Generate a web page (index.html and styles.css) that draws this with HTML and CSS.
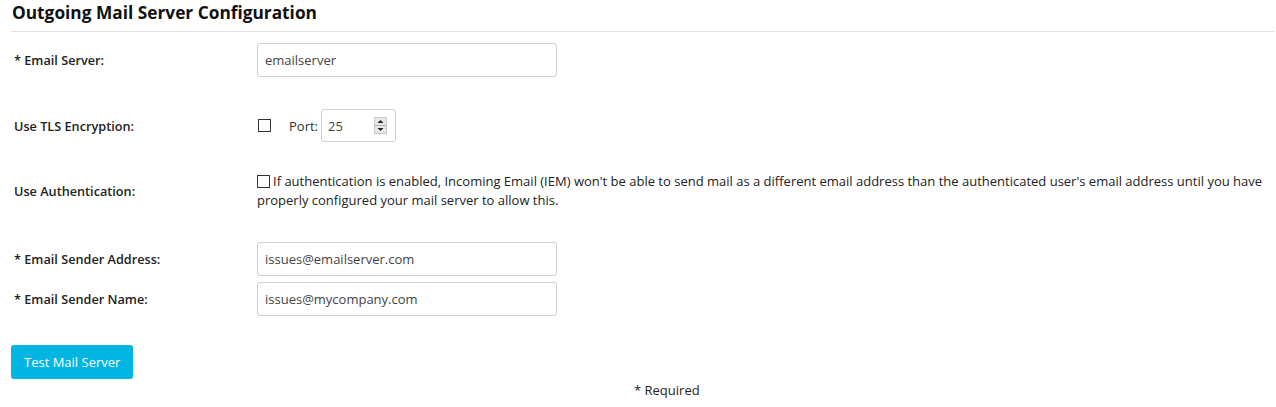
FILE: index.html
```html
<!DOCTYPE html>
<html>
<head>
<meta charset="utf-8">
<link rel="stylesheet" href="styles.css">
</head>
<body>
<div class="page">
  <h2 class="title">Outgoing Mail Server Configuration</h2>
  <div class="form">
    <div class="row r1">
      <label class="lbl">* Email Server:</label>
      <div class="field"><input class="txt" type="text" value="emailserver"></div>
    </div>
    <div class="row r2">
      <label class="lbl">Use TLS Encryption:</label>
      <div class="field tls">
        <span class="cb"></span>
        <span class="port-lbl">Port:</span>
        <div class="num">
          <span class="num-val">25</span>
          <span class="spin">
            <svg width="13" height="17" viewBox="0 0 13 17"><rect x="0.5" y="0.5" width="12" height="16" fill="#e8e8e8" stroke="#c8c8c8"/><line x1="1" y1="8.5" x2="12" y2="8.5" stroke="#b0b0b0"/><path d="M3.5 6 L6.5 3 L9.5 6 Z" fill="#222"/><path d="M3.5 11 L9.5 11 L6.5 14 Z" fill="#222"/></svg>
          </span>
        </div>
      </div>
    </div>
    <div class="row r3">
      <label class="lbl">Use Authentication:</label>
      <div class="field auth"><span class="cb cb-inline"></span>If authentication is enabled, Incoming Email (IEM) won't be able to send mail as a different email address than the authenticated user's email address until you have properly configured your mail server to allow this.</div>
    </div>
    <div class="row r4">
      <label class="lbl">* Email Sender Address:</label>
      <div class="field"><input class="txt" type="text" value="issues@emailserver.com"></div>
    </div>
    <div class="row r5">
      <label class="lbl">* Email Sender Name:</label>
      <div class="field"><input class="txt" type="text" value="issues@mycompany.com"></div>
    </div>
  </div>
  <button class="btn">Test Mail Server</button>
  <div class="req">* Required</div>
</div>
</body>
</html>
```
FILE: styles.css
```css
html, body {
  margin: 0;
  padding: 0;
  background: #fff;
}
body {
  font-family: "Open Sans", "Noto Sans", sans-serif;
  font-size: 13px;
  color: #222;
}
.page {
  padding: 0 1px 0 11px;
}
.title {
  margin: 0;
  padding: 3px 0 0 1px;
  height: 28px;
  font-size: 17.3px;
  font-weight: 700;
  color: #111;
  line-height: 20px;
  border-bottom: 1px solid #e2e2e2;
}
.form {
  padding-left: 3px;
}
.row {
  display: flex;
  align-items: center;
}
.lbl {
  width: 243px;
  flex: none;
  font-size: 12.7px;
  font-weight: 600;
  color: #222;
}
.field {
  flex: 1;
}
.r1 { margin-top: 11px; }
.r2 { margin-top: 32px; }
.r3 { margin-top: 30px; }
.r4 { margin-top: 32px; }
.r5 { margin-top: 6px; }
.txt {
  box-sizing: border-box;
  width: 300px;
  height: 34px;
  border: 1px solid #cfcfcf;
  border-radius: 3px;
  padding: 0 7px;
  font-family: inherit;
  font-size: 13px;
  color: #444;
  outline: none;
  margin: 0;
  display: block;
}
.tls {
  display: flex;
  align-items: center;
}
.cb {
  display: inline-block;
  box-sizing: border-box;
  width: 13px;
  height: 13px;
  border: 1px solid #333;
  background: #fff;
  flex: none;
}
.tls .cb {
  margin-left: 1px;
}
.port-lbl {
  margin-left: 18px;
  color: #333;
}
.num {
  box-sizing: border-box;
  margin-left: 3px;
  width: 75px;
  height: 33px;
  border: 1px solid #cfcfcf;
  border-radius: 3px;
  display: flex;
  align-items: center;
  padding-left: 6px;
  color: #444;
}
.num-val {
  flex: 1;
}
.spin {
  display: flex;
  margin-right: 8px;
}
.auth {
  line-height: 19px;
  color: #222;
  padding-right: 4px;
}
.cb-inline {
  vertical-align: -2px;
  margin-right: 3px;
}
.btn {
  margin-top: 29px;
  display: block;
  height: 34px;
  padding: 0 13px;
  background: #00b5e2;
  color: #fff;
  border: none;
  border-radius: 3px;
  font-family: inherit;
  font-size: 13px;
}
.req {
  margin-top: 0;
  padding-left: 623px;
  height: 22px;
  line-height: 22px;
  color: #222;
}
```
